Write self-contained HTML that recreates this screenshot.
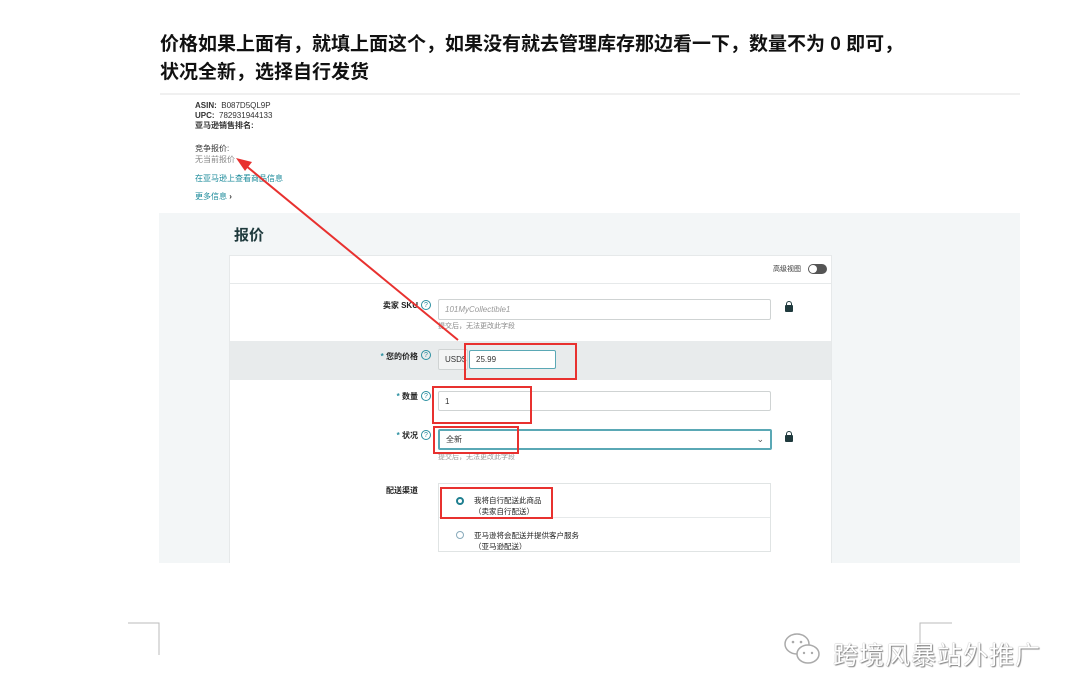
<!DOCTYPE html>
<html><head><meta charset="utf-8"><style>
*{margin:0;padding:0;box-sizing:border-box}
body{width:1080px;height:699px;background:#fff;position:relative;overflow:hidden;font-family:"Liberation Sans","Noto Sans CJK SC",sans-serif;color:#111}
.a{position:absolute}
.s{font-size:8px;color:#333}
.inp{position:absolute;border:1px solid #cfd3d3;background:#fff;border-radius:2px;font-size:8px;color:#333;padding-left:6px;display:flex;align-items:center}
.rb{position:absolute;border:2px solid #e8312f}
.q{position:absolute;width:10px;height:10px;border:1px solid #2a8fa0;border-radius:50%;font-size:7px;color:#2a8fa0;text-align:center;line-height:9px}
.lock{position:absolute;width:8px;height:7px;background:#1f3a3d;border-radius:1px}
.lock:before{content:"";position:absolute;left:1px;top:-4px;width:4px;height:4px;border:1px solid #1f3a3d;border-bottom:none;border-radius:3px 3px 0 0}
.lab{font-size:8px;font-weight:bold;color:#222;text-align:right}
</style></head><body>
<div class="a" style="left:160px;top:31px;font-size:19px;font-weight:bold;line-height:28px;color:#111;white-space:nowrap">价格如果上面有，就填上面这个，如果没有就去管理库存那边看一下，数量不为 0 即可，<br>状况全新，选择自行发货</div>
<div class="a" style="left:160px;top:93px;width:860px;height:2px;background:#f0f0f0"></div>
<div class="a s" style="left:195px;top:101px;line-height:10px"><b>ASIN:</b> &nbsp;B087D5QL9P<br><b>UPC:</b> &nbsp;782931944133<br><b>亚马逊销售排名:</b></div>
<div class="a s" style="left:195px;top:143px;line-height:11px">竞争报价:<br><span style="color:#888">无当前报价</span></div>
<div class="a s" style="left:195px;top:173px;color:#1a8a9a">在亚马逊上查看商品信息</div>
<div class="a s" style="left:195px;top:191px;color:#1a8a9a">更多信息 <b style="color:#333">›</b></div>
<div class="a" style="left:159px;top:213px;width:861px;height:350px;background:#f3f6f7"></div>
<div class="a" style="left:234px;top:224px;font-size:15px;font-weight:bold;color:#1f3a3d">报价</div>
<div class="a" style="left:229px;top:255px;width:603px;height:308px;background:#fff;border:1px solid #e6e9ea;border-bottom:none"></div>
<div class="a" style="left:773px;top:264px;font-size:7px;color:#333">高级视图</div>
<div class="a" style="left:808px;top:264px;width:19px;height:10px;border-radius:5px;background:#555"><div style="position:absolute;left:1px;top:1px;width:8px;height:8px;border-radius:50%;background:#fff"></div></div>
<div class="a" style="left:230px;top:283px;width:601px;height:1px;background:#e6e9ea"></div>
<div class="a lab" style="left:330px;top:300px;width:88px">卖家 SKU</div><div class="q" style="left:421px;top:300px">?</div>
<div class="inp" style="left:438px;top:299px;width:333px;height:21px;color:#999;font-style:italic">101MyCollectible1</div>
<div class="lock" style="left:785px;top:305px"></div>
<div class="a" style="left:438px;top:321px;font-size:7px;color:#888">提交后，无法更改此字段</div>
<div class="a" style="left:230px;top:341px;width:601px;height:39px;background:#e8ebec"></div>
<div class="a lab" style="left:330px;top:351px;width:88px"><span style="color:#2a8fa0">*</span> 您的价格</div><div class="q" style="left:421px;top:350px">?</div>
<div class="inp" style="left:438px;top:349px;width:30px;height:21px;background:#f3f4f4">USD$</div>
<div class="inp" style="left:469px;top:350px;width:87px;height:19px;border-color:#5aa8b5">25.99</div>
<div class="a lab" style="left:330px;top:391px;width:88px"><span style="color:#2a8fa0">*</span> 数量</div><div class="q" style="left:421px;top:391px">?</div>
<div class="inp" style="left:438px;top:391px;width:333px;height:20px">1</div>
<div class="a lab" style="left:330px;top:430px;width:88px"><span style="color:#2a8fa0">*</span> 状况</div><div class="q" style="left:421px;top:430px">?</div>
<div class="inp" style="left:438px;top:429px;width:334px;height:21px;border:2px solid #5aa8b5">全新<span style="position:absolute;right:6px;top:3px;font-size:9px;color:#555">⌄</span></div>
<div class="lock" style="left:785px;top:435px"></div>
<div class="a" style="left:438px;top:452px;font-size:7px;color:#999">提交后，无法更改此字段</div>
<div class="a lab" style="left:386px;top:485px;text-align:left">配送渠道</div>
<div class="a" style="left:438px;top:483px;width:333px;height:69px;border:1px solid #e0e4e4;background:#fff"></div>
<div class="a" style="left:439px;top:517px;width:331px;height:1px;background:#e6e9ea"></div>
<div class="a" style="left:456px;top:497px;width:8px;height:8px;border-radius:50%;border:2.5px solid #1f7f90"></div>
<div class="a" style="left:474px;top:495px;font-size:7.5px;line-height:11px;color:#222">我将自行配送此商品<br>（卖家自行配送）</div>
<div class="a" style="left:456px;top:531px;width:8px;height:8px;border-radius:50%;border:1px solid #8ab"></div>
<div class="a" style="left:474px;top:530px;font-size:7.5px;line-height:11px;color:#222">亚马逊将会配送并提供客户服务<br>（亚马逊配送）</div>
<div class="rb" style="left:464px;top:343px;width:113px;height:37px"></div>
<div class="rb" style="left:432px;top:386px;width:100px;height:38px"></div>
<div class="rb" style="left:433px;top:426px;width:86px;height:28px"></div>
<div class="rb" style="left:440px;top:487px;width:113px;height:32px"></div>
<svg class="a" style="left:0;top:0" width="1080" height="699"><line x1="458" y1="340" x2="245" y2="165" stroke="#e8312f" stroke-width="2"/><polygon points="236,158 252,162 245,171" fill="#e8312f"/>
<path d="M128 623h31v32M920 655v-32h32" stroke="#bbb" fill="none" stroke-width="1"/></svg>
<svg class="a" style="left:783px;top:632px" width="40" height="36"><ellipse cx="14" cy="12" rx="12" ry="10" fill="none" stroke="#aaa" stroke-width="1.5"/><ellipse cx="25" cy="22" rx="11" ry="9" fill="#fff" stroke="#aaa" stroke-width="1.5"/><circle cx="10" cy="10" r="1.3" fill="#aaa"/><circle cx="18" cy="10" r="1.3" fill="#aaa"/><circle cx="21" cy="21" r="1.2" fill="#aaa"/><circle cx="29" cy="21" r="1.2" fill="#aaa"/></svg>
<div class="a" style="left:833px;top:636px;font-size:25px;color:#fff;text-shadow:0 0 1px #777,1px 1px 1px #888;letter-spacing:1px">跨境风暴站外推广</div>
</body></html>
